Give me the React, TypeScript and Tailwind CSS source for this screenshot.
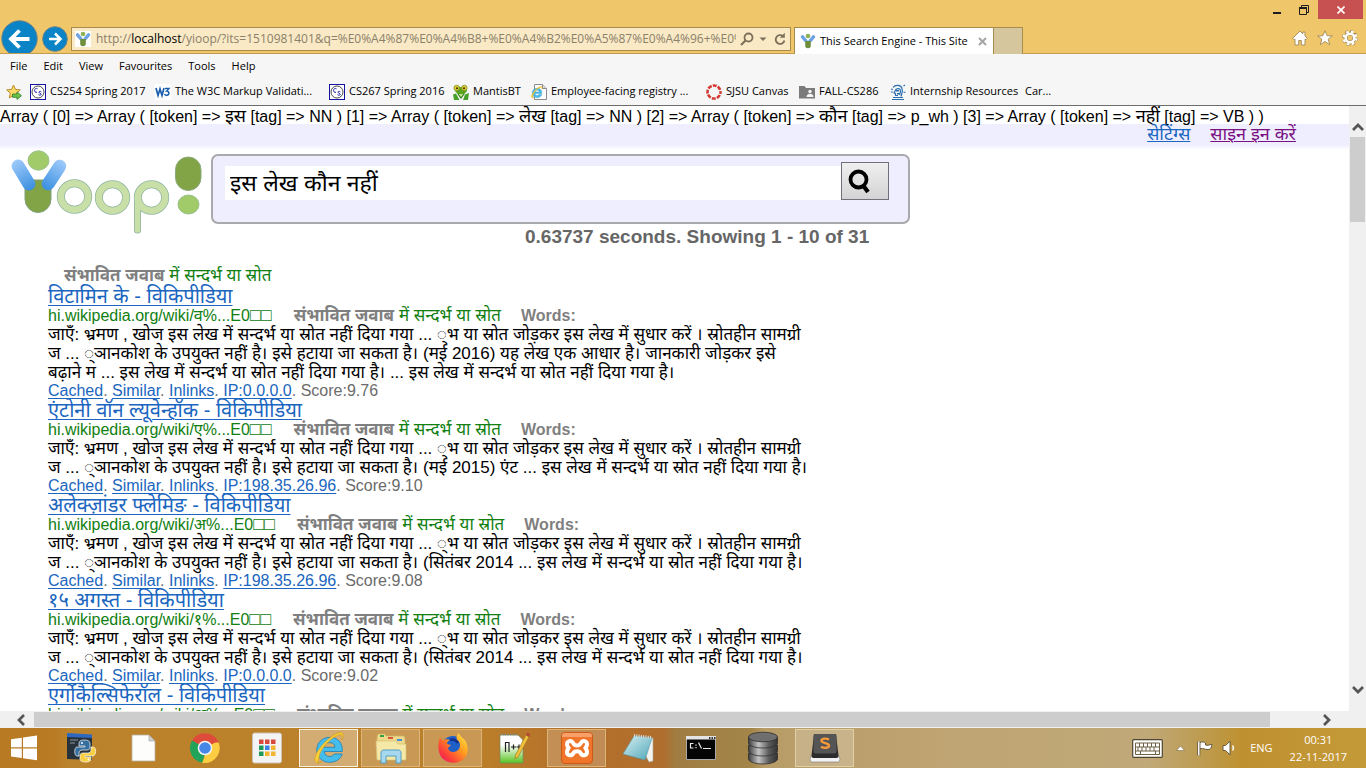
import React from "react";

const UI = "font-['Open_Sans','Noto_Sans',sans-serif]";
const ARIAL = "font-['Liberation_Sans','Noto_Sans',sans-serif]";

/* ---------- small drawings ---------- */

function YioopMark({ className }: { className: string }) {
  return (
    <svg viewBox="0 0 16 16" className={className} aria-hidden="true">
      <rect width="16" height="16" fill="#fff" />
      <path d="M2.500 3.800 L6 8 M13.500 3.800 L10 8" stroke="#6ea3e4" strokeWidth="3.400" strokeLinecap="round" />
      <circle cx="8" cy="3" r="2.300" fill="#8db255" />
      <path d="M5.200 8h5.600v4.500a2.800 2.800 0 0 1-5.600 0z" fill="#6f8f3c" />
    </svg>
  );
}

function YioopLogo() {
  return (
    <svg viewBox="0 0 194 88" className="h-[88px] w-[194px]" role="img" aria-label="Yioop!">
      <defs>
        <linearGradient id="arm" x1="0" y1="0" x2="0" y2="1">
          <stop offset="0" stopColor="#9fcbfb" />
          <stop offset="1" stopColor="#3b8fe0" />
        </linearGradient>
      </defs>
      <path d="M15 30h26v19a13 13.500 0 0 1-26 0z" fill="#82a446" stroke="#7d9f7c" />
      <rect x="-6.500" y="-17" width="13" height="34" rx="6.500" transform="translate(13.500 25) rotate(-31)" fill="url(#arm)" />
      <rect x="-6.500" y="-17" width="13" height="34" rx="6.500" transform="translate(44 25) rotate(33)" fill="url(#arm)" />
      <ellipse cx="28.500" cy="10.500" rx="10.500" ry="9.700" fill="#a1cb69" stroke="#9abf8c" />
      <g fill="none" stroke="#8fb3a0" strokeWidth="8">
        <ellipse cx="64.500" cy="46.500" rx="13.700" ry="13.200" />
        <ellipse cx="102.500" cy="47.500" rx="13.700" ry="13.200" />
        <path d="M127.500 48v32" strokeWidth="7" strokeLinecap="round" />
        <ellipse cx="141.500" cy="47.500" rx="13.700" ry="13.200" />
      </g>
      <g fill="none" stroke="#c8e0a8" strokeWidth="6.500">
        <ellipse cx="64.500" cy="46.500" rx="13.700" ry="13.200" />
        <ellipse cx="102.500" cy="47.500" rx="13.700" ry="13.200" />
        <path d="M127.500 48v32" strokeWidth="5.500" strokeLinecap="round" />
        <ellipse cx="141.500" cy="47.500" rx="13.700" ry="13.200" />
      </g>
      <rect x="165.500" y="7" width="25.500" height="33.500" rx="12.700" fill="#82a446" stroke="#8bab7c" />
      <ellipse cx="178.500" cy="54.500" rx="10.500" ry="9.500" fill="#a1cb69" stroke="#9abf8c" />
    </svg>
  );
}

function CsIcon() {
  return (
    <svg viewBox="0 0 16 16" className="size-4 shrink-0" aria-hidden="true">
      <rect x=".5" y=".5" width="15" height="15" fill="#fff" stroke="#1414a0" />
      <circle cx="8" cy="8" r="6" fill="none" stroke="#222" strokeWidth=".8" />
      <path d="M7.500 4.800C5.500 3.500 3.700 6 5 7.800c.6.600 1.400.700 2 .400M11.300 7.800c-1-.8-2.500-.4-2.300.6s2.400.8 2.300 2c-.3 1-2 1-2.800.2" fill="none" stroke="#1a1aa8" />
    </svg>
  );
}

function StarAddIcon() {
  return (
    <svg viewBox="0 0 16 16" className="size-4 shrink-0" aria-hidden="true">
      <path d="M7.500 1l2 4.400 4.800.500-3.600 3.200 1 4.800-4.200-2.500-4.200 2.500 1-4.800L.7 5.900l4.800-.500z" fill="#fbd968" stroke="#b98c28" />
      <path d="M6.500 10h4.500V7.800l4.500 3.900-4.500 3.800v-2.200H6.500z" fill="#6cc04a" stroke="#2f7d28" strokeWidth=".8" />
    </svg>
  );
}

function W3Icon() {
  return (
    <svg viewBox="0 0 16 16" className="size-4 shrink-0" aria-hidden="true">
      <rect width="16" height="16" fill="#fff" />
      <path d="M1 4l2 7.500L5 5l2 6.500L9 4" fill="none" stroke="#1a5fae" strokeWidth="1.700" />
      <path d="M10 4.500h4l-2.300 2.600c2.600-.2 3.200 4-.2 4.300-1 0-1.700-.5-2-1.300" fill="none" stroke="#1a5fae" strokeWidth="1.500" />
    </svg>
  );
}

function MantisIcon() {
  return (
    <svg viewBox="0 0 16 16" className="size-4 shrink-0" aria-hidden="true">
      <path d="M3 3l10 0 1 4-3 3.500h-6L2 7z" fill="#58a521" />
      <path d="M0 10.500l3-1 3.500 6.500H1zM16 9l-4 1.500-2 5.500h5z" fill="#47a02a" />
      <path d="M5 10l3 4 3-4" stroke="#2d7b1b" strokeWidth="1.200" fill="#c4e58c" />
      <circle cx="3.700" cy="4" r="2.800" fill="#e6c72d" stroke="#66901f" strokeWidth=".7" />
      <circle cx="11.300" cy="4" r="2.800" fill="#e6c72d" stroke="#66901f" strokeWidth=".7" />
      <circle cx="4" cy="4.200" r="1" fill="#332c10" />
      <circle cx="11" cy="4.200" r="1" fill="#332c10" />
    </svg>
  );
}

function IeLetter() {
  return (
    <>
      <path
        d="M25.800 20.500H11.200c.3 3.400 2.500 5 5.400 5 2.200 0 3.700-.9 4.600-2.500h8c-1.800 5.500-6.700 8.300-12.500 8.300C9.300 31.300 3.800 26.300 3.800 19S9.300 6.300 16.800 6.300c8 0 13 5.400 12.500 14.200zM22 16.300c-.3-3-2.200-4.700-5.300-4.700s-5 1.700-5.500 4.700z"
        fill="#45bdec"
        stroke="#1a7fb8"
        strokeWidth=".8"
      />
      <path d="M6 27.500C3.500 32 5 33 9 30.500 2 34.500-1 29 5.500 19 12 9.500 24 0 28.500 1.700c2.500 1 1.800 4.300.3 7 .6-2.800.5-4.700-1.300-5C23 3 13 12 9 18.500c-2.500 4-3 6.500-3 9z" fill="#f9cf3a" stroke="#d59e16" strokeWidth=".7" />
    </>
  );
}

function IePageIcon() {
  return (
    <svg viewBox="0 0 16 16" className="size-4 shrink-0" aria-hidden="true">
      <path d="M3.500.5h8l4 4v11h-12z" fill="#fff" stroke="#8b8b8b" />
      <path d="M11.500.5v4h4" fill="#ddd" stroke="#8b8b8b" />
      <g transform="translate(-.2 1.800) scale(.38)">
        <IeLetter />
      </g>
    </svg>
  );
}

function CanvasIcon() {
  return (
    <svg viewBox="0 0 16 16" className="size-4 shrink-0" aria-hidden="true">
      <circle cx="8" cy="8" r="6.500" fill="none" stroke="#d23a33" strokeWidth="2.600" strokeDasharray="3.900 1.205" strokeDashoffset="2" />
    </svg>
  );
}

function SharedFolderIcon() {
  return (
    <svg viewBox="0 0 16 16" className="size-4 shrink-0" aria-hidden="true">
      <path d="M0 2h5.500l1.500 2h9v10.500H0z" fill="#7b7b7b" />
      <circle cx="11" cy="7.500" r="1.700" fill="#f5f5f5" />
      <path d="M7.500 13c0-4.200 7-4.200 7 0z" fill="#f5f5f5" />
    </svg>
  );
}

function StatueIcon() {
  return (
    <svg viewBox="0 0 16 16" className="size-4 shrink-0" aria-hidden="true">
      <g fill="none" stroke="#2c6fb0" strokeWidth="1.200">
        <path d="M3 3.500C5 .5 11 .5 12 4.500c1.300 3-.3 5.500-1 8" />
        <path d="M5 7c1-3 5-3 5.500-.5.300 2-1 2.500-.5 4.500M5 7l-1 2 1.500.5v2H8" />
        <path d="M2 15.500h12M3 13.500h10M1 5l2 .5M.8 8l2 0M13.500 2l1.500-1M13.500 8l2 .500" />
      </g>
      <path d="M6 6h3v1.500H6zM7 9h3v1.500H7z" fill="#2c6fb0" />
    </svg>
  );
}

/* ---------- browser frame ---------- */

function BrowserHeader() {
  return (
    <header className={`${UI} flex h-[54px] items-start border-b border-[#c29d4f] bg-[#efc76a] text-[12px]`}>
      <div className="flex h-[53px] shrink-0 items-start overflow-hidden pt-[20px] pl-[1px]">
        <button aria-label="Back" className="size-[37px] shrink-0">
          <svg viewBox="0 0 37 37" className="size-full">
            <circle cx="18.500" cy="18.500" r="17.700" fill="#0a84c6" stroke="#68808a" />
            <path d="M28.500 19H11M18.500 10.500L10 19l8.500 8.500" fill="none" stroke="#fff" strokeWidth="3.800" />
          </svg>
        </button>
        <button aria-label="Forward" className="mt-[6px] ml-1 size-[26px] shrink-0">
          <svg viewBox="0 0 26 26" className="size-full">
            <circle cx="13" cy="13" r="12.300" fill="#0a84c6" stroke="#68808a" />
            <path d="M7 13h11M13 7.500l5.500 5.500-5.500 5.500" fill="none" stroke="#fff" strokeWidth="2.500" />
          </svg>
        </button>
      </div>
      <div className="mt-[27px] ml-[3px] flex h-6 w-[720px] shrink-0 items-center border border-[#a98c4c] bg-[#f9e9c5] pl-[3px] text-[#8b8069]">
        <YioopMark className="mr-[5px] size-4 shrink-0" />
        <div className="w-[640px] overflow-hidden whitespace-nowrap">
          http://<span className="text-black">localhost</span>
          /yioop/?its=1510981401&amp;q=%E0%A4%87%E0%A4%B8+%E0%A4%B2%E0%A5%87%E0%A4%96+%E0%A4
        </div>
        <button aria-label="Search" className="ml-1 shrink-0">
          <svg viewBox="0 0 14 14" className="size-[14px]">
            <circle cx="8.500" cy="5.500" r="4" fill="none" stroke="#7c705a" strokeWidth="1.800" />
            <path d="M5.500 8.500L1 13" stroke="#7c705a" strokeWidth="2.200" />
          </svg>
        </button>
        <button aria-label="Show address bar list" className="ml-[5px] shrink-0">
          <svg viewBox="0 0 8 8" className="size-2">
            <path d="M.5 2.500h7L4 6z" fill="#7c705a" />
          </svg>
        </button>
        <button aria-label="Refresh" className="ml-[6px] shrink-0">
          <svg viewBox="0 0 14 14" className="size-[14px]">
            <path d="M10 4.200A4.400 4.400 0 1 0 11.400 8.500" fill="none" stroke="#7c705a" strokeWidth="1.800" />
            <path d="M11.800.8v5H6.800z" fill="#7c705a" />
          </svg>
        </button>
      </div>
      <div className="mt-[27px] ml-[3px] flex h-[27px] w-[200px] shrink-0 items-center border border-b-0 border-[#a98c4c] bg-white pl-[5px] text-[11px]">
        <YioopMark className="mr-1 size-4 shrink-0" />
        <span className="whitespace-nowrap">This Search Engine - This Site</span>
        <button aria-label="Close tab" className="mr-[6px] ml-auto shrink-0">
          <svg viewBox="0 0 9 9" className="size-[9px]">
            <path d="M1 1l7 7M8 1L1 8" stroke="#a5a5a5" strokeWidth="2" />
          </svg>
        </button>
      </div>
      <button aria-label="New tab" className="mt-[27px] h-[27px] w-[29px] shrink-0 border border-b-0 border-l-0 border-[#a98c4c] bg-[#d6c69e]" />
      <div className="ml-auto flex flex-col items-end pr-[3px]">
        <div className="flex h-[19px] items-center">
          <button aria-label="Minimise" className="px-[9px]">
            <svg viewBox="0 0 8 10" className="h-[10px] w-2">
              <path d="M0 8h8" stroke="#1d1d1d" strokeWidth="2" />
            </svg>
          </button>
          <button aria-label="Restore" className="px-[9px]">
            <svg viewBox="0 0 10 10" className="size-[10px]">
              <path d="M2.500 2V.500h7v7H8" fill="none" stroke="#1d1d1d" />
              <path d="M.5 3h7v6.500h-7z" fill="none" stroke="#1d1d1d" />
              <path d="M0 3h8" stroke="#1d1d1d" strokeWidth="2" />
            </svg>
          </button>
          <button aria-label="Close" className="flex h-[19px] w-[45px] items-center justify-center bg-[#c75050]">
            <svg viewBox="0 0 8 8" className="size-2">
              <path d="M.5.5l7 7M7.500.5l-7 7" stroke="#fff" strokeWidth="1.700" />
            </svg>
          </button>
        </div>
        <div className="mt-[11px] flex gap-[9px] pr-[5px]">
          <button aria-label="Home">
            <svg viewBox="0 0 16 16" className="size-4">
              <path d="M8 1L.7 8.300l1.500 1.500.8-.8v6h3.700v-4.500h2.600V15H13V9l.8.8 1.500-1.500L13 6V2h-2.200v1.800z" fill="#fff" stroke="#a18955" strokeWidth=".9" />
            </svg>
          </button>
          <button aria-label="Favourites">
            <svg viewBox="0 0 16 16" className="size-4">
              <path d="M8 .8l2.200 5h5.100l-4.100 3.400 1.500 5.500L8 11.500l-4.700 3.200 1.500-5.500L.7 5.800h5.100z" fill="#fff" stroke="#a18955" strokeWidth=".9" />
            </svg>
          </button>
          <button aria-label="Settings">
            <svg viewBox="0 0 16 16" className="size-4">
              <circle cx="8" cy="8" r="6.600" fill="none" stroke="#a18955" strokeWidth="2.800" strokeDasharray="3 2.184" />
              <circle cx="8" cy="8" r="4.400" fill="none" stroke="#a18955" strokeWidth="4" />
              <circle cx="8" cy="8" r="6.300" fill="none" stroke="#fff" strokeWidth="2.400" strokeDasharray="2.400 2.548" strokeDashoffset="-.3" />
              <circle cx="8" cy="8" r="4.300" fill="none" stroke="#fff" strokeWidth="2.600" />
            </svg>
          </button>
        </div>
      </div>
    </header>
  );
}

const menuItems = ["File", "Edit", "View", "Favourites", "Tools", "Help"];

const bookmarks = [
  { label: "CS254 Spring 2017", icon: <CsIcon />, width: "w-[125px]" },
  { label: "The W3C Markup Validati...", icon: <W3Icon />, width: "w-[174px]" },
  { label: "CS267 Spring 2016", icon: <CsIcon />, width: "w-[124px]" },
  { label: "MantisBT", icon: <MantisIcon />, width: "w-[78px]" },
  { label: "Employee-facing registry ...", icon: <IePageIcon />, width: "w-[175px]" },
  { label: "SJSU Canvas", icon: <CanvasIcon />, width: "w-[93px]" },
  { label: "FALL-CS286", icon: <SharedFolderIcon />, width: "w-[91px]" },
  { label: "Internship Resources", icon: <StatueIcon />, width: "w-[135px]" },
  { label: "Car...", icon: null, width: "w-[40px]" },
];

function Toolbars() {
  return (
    <div className={`${UI} border-b border-[#6d6d6d] bg-[#f6f6f6] text-[11px] whitespace-nowrap text-black`}>
      <nav aria-label="Menu" className="flex h-6 items-center gap-4 pl-[10px]">
        {menuItems.map((item) => (
          <button key={item}>{item}</button>
        ))}
      </nav>
      <nav aria-label="Favourites" className="flex h-[27px] items-center pl-[6px]">
        <button aria-label="Add to favourites" className="w-6">
          <StarAddIcon />
        </button>
        {bookmarks.map((b) => (
          <a key={b.label} href="#" className={`${b.width} flex shrink-0 items-center gap-1`}>
            {b.icon}
            <span>{b.label}</span>
          </a>
        ))}
      </nav>
    </div>
  );
}

/* ---------- page ---------- */

interface Result {
  title: string;
  letter: string;
  lines: string[];
  ip: string;
  score: string;
}

const FIRST_LINE = "जाएँ: भ्रमण , खोज इस लेख में सन्दर्भ या स्रोत नहीं दिया गया ... ्भ या स्रोत जोड़कर इस लेख में सुधार करें । स्रोतहीन सामग्री";

const results: Result[] = [
  {
    title: "विटामिन के - विकिपीडिया",
    letter: "व",
    lines: [
      FIRST_LINE,
      "ज ... ्ञानकोश के उपयुक्त नहीं है। इसे हटाया जा सकता है। (मई 2016) यह लेख एक आधार है। जानकारी जोड़कर इसे",
      "बढ़ाने म ... इस लेख में सन्दर्भ या स्रोत नहीं दिया गया है। ... इस लेख में सन्दर्भ या स्रोत नहीं दिया गया है।",
    ],
    ip: "IP:0.0.0.0",
    score: "9.76",
  },
  {
    title: "एंटोनी वॉन ल्यूवेन्हॉक - विकिपीडिया",
    letter: "ए",
    lines: [
      FIRST_LINE,
      "ज ... ्ञानकोश के उपयुक्त नहीं है। इसे हटाया जा सकता है। (मई 2015) एंट ... इस लेख में सन्दर्भ या स्रोत नहीं दिया गया है।",
    ],
    ip: "IP:198.35.26.96",
    score: "9.10",
  },
  {
    title: "अलेक्ज़ांडर फ्लेमिङ - विकिपीडिया",
    letter: "अ",
    lines: [
      FIRST_LINE,
      "ज ... ्ञानकोश के उपयुक्त नहीं है। इसे हटाया जा सकता है। (सितंबर 2014 ... इस लेख में सन्दर्भ या स्रोत नहीं दिया गया है।",
    ],
    ip: "IP:198.35.26.96",
    score: "9.08",
  },
  {
    title: "१५ अगस्त - विकिपीडिया",
    letter: "१",
    lines: [
      FIRST_LINE,
      "ज ... ्ञानकोश के उपयुक्त नहीं है। इसे हटाया जा सकता है। (सितंबर 2014 ... इस लेख में सन्दर्भ या स्रोत नहीं दिया गया है।",
    ],
    ip: "IP:0.0.0.0",
    score: "9.02",
  },
  {
    title: "एर्गोकैल्सिफेरॉल - विकिपीडिया",
    letter: "अ",
    lines: [],
    ip: "",
    score: "",
  },
];

function PossibleAnswer() {
  return (
    <span className="text-[17px]">
      <b className="text-[#7f7f7f]">संभावित जवाब</b> <span className="text-[#118011]">में सन्दर्भ या स्रोत</span>
    </span>
  );
}

function MetaLink({ children }: { children: React.ReactNode }) {
  return (
    <>
      <a href="#" className="text-[#1a66c0] underline underline-offset-2">
        {children}
      </a>
      .{" "}
    </>
  );
}

function ResultItem({ r }: { r: Result }) {
  return (
    <article className="whitespace-nowrap">
      <h2 className="h-5 text-[20px] leading-5">
        <a href="#" className="text-[#1a66c0] underline decoration-1 underline-offset-2">
          {r.title}
        </a>
      </h2>
      <div className="flex h-[19px] items-baseline leading-[19px] text-[#118011]">
        <span>
          hi.wikipedia.org/wiki/{r.letter}%...E0<span className="text-[18px]">□□</span>
        </span>
        <span className="ml-[22px]">
          <PossibleAnswer />
        </span>
        <b className="ml-5 text-[#7f7f7f]">Words:</b>
      </div>
      {r.lines.length > 0 && (
        <>
          <p className="text-[17px] leading-[19px]">
            {r.lines.map((line) => (
              <span key={line} className="block h-[19px]">
                {line}
              </span>
            ))}
          </p>
          <div className="h-[18px] leading-[17px] text-[#6b6b6b]">
            <MetaLink>Cached</MetaLink>
            <MetaLink>Similar</MetaLink>
            <MetaLink>Inlinks</MetaLink>
            <MetaLink>{r.ip}</MetaLink>
            Score:{r.score}
          </div>
        </>
      )}
    </article>
  );
}

function Token({ children }: { children: string }) {
  return <span className="text-[18px]">{children}</span>;
}

function Page() {
  return (
    <main className={`${ARIAL} min-h-0 min-w-0 flex-1 overflow-hidden bg-white text-[16px] text-black`}>
      <div className="h-[18px] leading-5 whitespace-nowrap">
        Array ( [0] =&gt; Array ( [token] =&gt; <Token>इस</Token> [tag] =&gt; NN ) [1] =&gt; Array ( [token] =&gt; <Token>लेख</Token> [tag] =&gt; NN ) [2] =&gt; Array ( [token]
        =&gt; <Token>कौन</Token> [tag] =&gt; p_wh ) [3] =&gt; Array ( [token] =&gt; <Token>नहीं</Token> [tag] =&gt; VB ) )
      </div>
      <div className="flex h-[26px] justify-end gap-5 bg-linear-to-b from-[#eeeeff] from-80% to-white pr-[53px] text-[18px] leading-5">
        <a href="#" className="text-[#1a66c0] underline decoration-1">
          सेटिंग्स
        </a>
        <a href="#" className="text-[#7a1182] underline decoration-1">
          साइन इन करें
        </a>
      </div>
      <div className="flex pl-[10px]">
        <YioopLogo />
        <form className="mt-[4px] ml-[7px] flex h-[70px] w-[699px] items-start rounded-[7px] border-2 border-[#a9a9ae] bg-[#eeeeff] pt-[6px] pl-3" onSubmit={(e) => e.preventDefault()}>
          <input
            aria-label="Search"
            defaultValue="इस लेख कौन नहीं"
            className="mt-[4px] h-[34px] w-[616px] bg-white px-[5px] text-[23px] outline-none"
          />
          <button aria-label="Search" className="h-[38px] w-12 border border-[#707078] bg-linear-to-b from-[#efefef] to-[#d4d4d4] pl-[6px]">
            <svg viewBox="0 0 24 26" className="h-[26px] w-6">
              <circle cx="10.500" cy="11.500" r="8" fill="none" stroke="#000" strokeWidth="3.800" />
              <path d="M15.500 18l4.500 6" stroke="#000" strokeWidth="4.200" />
            </svg>
          </button>
        </form>
      </div>
      <div className="-mt-[12px] pl-[525px] text-[19px] leading-[22px] font-bold text-[#666]">0.63737 seconds. Showing 1 - 10 of 31</div>
      <section aria-label="Results" className="mt-[17px] pl-12">
        <div className="h-[21px] pl-4 leading-[21px]">
          <PossibleAnswer />
        </div>
        {results.map((r) => (
          <ResultItem key={r.title} r={r} />
        ))}
      </section>
    </main>
  );
}

/* ---------- scroll bars ---------- */

function Chevron({ turn }: { turn: string }) {
  return (
    <svg viewBox="0 0 12 12" className={`${turn} size-3`} aria-hidden="true">
      <path d="M1 9l5-5 5 5" fill="none" stroke="#555" strokeWidth="2.700" />
    </svg>
  );
}

function VerticalScroll() {
  return (
    <div className="flex w-[17px] shrink-0 flex-col items-center bg-[#f0f0f0] pt-[15px] pb-[15px]">
      <button aria-label="Scroll up">
        <Chevron turn="rotate-0" />
      </button>
      <div className="mt-1 h-[85px] w-[15px] bg-[#cdcdcd]" />
      <button aria-label="Scroll down" className="mt-auto">
        <Chevron turn="rotate-180" />
      </button>
    </div>
  );
}

function HorizontalScroll() {
  return (
    <div className="flex h-[17px] shrink-0 items-center bg-[#f0f0f0] pr-[33px] pl-[15px]">
      <button aria-label="Scroll left">
        <Chevron turn="-rotate-90" />
      </button>
      <div className="mr-[51px] ml-[7px] h-[15px] flex-1 bg-[#cdcdcd]" />
      <button aria-label="Scroll right">
        <Chevron turn="rotate-90" />
      </button>
    </div>
  );
}

/* ---------- task bar ---------- */

const PythonIcon = () => (
  <svg viewBox="0 0 32 32" className="size-8">
    <path d="M2 2l25 2v24L2 27z" fill="#28323c" />
    <path d="M2 1l25 1.500V6L2 5z" fill="#2e68c0" />
    <path d="M5 8h8M5 11h5" stroke="#8d9499" />
    <path d="M19 8c-4 0-5 1.500-5 4v2h6v1h-8c-3 0-3 9 0 9h2v-3c0-2 1.500-3 3-3h5c2 0 3-1 3-3v-3c0-3-2-4-6-4z" fill="#356f9f" stroke="#fff" strokeWidth=".7" />
    <path d="M21 30c4 0 5-1.500 5-4v-1h-6v-1h8c3 0 4-9 0-9h-2v3c0 2-1.500 3-3 3h-5c-2 0-3 1-3 3v3c0 2 2 3 6 3z" fill="#f8cf43" stroke="#fff" strokeWidth=".7" />
    <circle cx="17" cy="11" r="1" fill="#fff" />
    <circle cx="23.500" cy="27.500" r="1" fill="#fff" />
  </svg>
);

const FileIcon = () => (
  <svg viewBox="0 0 32 32" className="size-8">
    <path d="M5 3h17l6 6v20H5z" fill="#fdfdfb" stroke="#b7b0a0" strokeWidth=".8" />
    <path d="M22 3v6h6z" fill="#cfcfcf" stroke="#a9a9a9" strokeWidth=".7" />
  </svg>
);

const ChromeIcon = () => (
  <svg viewBox="0 0 32 32" className="size-8">
    <path d="M16 16L3 8.500A15 15 0 0 1 29.200 9.300z" fill="#df4b3b" />
    <path d="M16 16L29 9a15 15 0 0 1-13.500 22z" fill="#fdce42" />
    <path d="M16 16l1 1-3.500 13.800A15 15 0 0 1 3 8.500z" fill="#22a35a" />
    <path d="M16 9h13.200a15 15 0 0 1 1 1.500H16z" fill="#df4b3b" />
    <path d="M22 19.500L15.500 31h-2.400L18 19z" fill="#fdce42" />
    <circle cx="16" cy="16" r="7.300" fill="#f5f5f2" />
    <circle cx="16" cy="16" r="5.800" fill="#4787e8" />
  </svg>
);

const AppsIcon = () => (
  <svg viewBox="0 0 32 32" className="size-8">
    <rect x="1.500" y="1" width="29" height="30" rx="2" fill="#f4f4f4" stroke="#cbc2b4" />
    <g>
      <path d="M8 7.500h4.500V12H8zM14 7.500h4.500V12H14zM20 7.500h4.500V12H20z" fill="#d8483c" />
      <path d="M8 13.500h4.500V18H8zM8 19.500h4.500V24H8z" fill="#1e9957" />
      <path d="M14 13.500h4.500V18H14z" fill="#3c82e6" />
      <path d="M20 13.500h4.500V18H20zM14 19.500h4.500V24H14zM20 19.500h4.500V24H20z" fill="#f2b632" />
    </g>
  </svg>
);

const IeIcon = () => (
  <svg viewBox="0 0 32 34" className="h-[34px] w-8">
    <IeLetter />
  </svg>
);

const ExplorerIcon = () => (
  <svg viewBox="0 0 32 32" className="size-8">
    <path d="M2 5l1-3h7l1 2h18l1 3v20H2z" fill="#eed98a" stroke="#cdb35f" strokeWidth=".7" />
    <path d="M5 3h4v2H5z" fill="#35a24a" />
    <path d="M13 5h5v2h-5z" fill="#d9543b" />
    <path d="M22 7h5v2h-5z" fill="#3c8fd6" />
    <path d="M1 9h20l2 3h8v16H2z" fill="#f6e8a6" stroke="#d6c073" strokeWidth=".7" />
    <path d="M6 31V21c0-2 1-3 3-3h14c2 0 3 1 3 3v10h-5v-7H11v7z" fill="#a8d8ef" stroke="#4f9fc4" />
  </svg>
);

const FirefoxIcon = () => (
  <svg viewBox="0 0 32 32" className="size-8">
    <defs>
      <linearGradient id="fox" x1="1" y1="0" x2="0" y2="1">
        <stop offset="0" stopColor="#fff04a" />
        <stop offset=".4" stopColor="#ff9a1f" />
        <stop offset=".75" stopColor="#fb3a3c" />
        <stop offset="1" stopColor="#e3167c" />
      </linearGradient>
    </defs>
    <circle cx="16" cy="16" r="12" fill="#1f5fc8" />
    <path d="M3 5c1 2 2 3 3 3.500C8 7 11 7 13 8c-2 1-3 2-3 4l4 1-3 3c1 5 8 5 11 1 2-4 1-7-2-9-1-3 0-5 2-7 0 3 5 5 7 9 3 7 2 13-3 17.500-6 5-15 4-20-.5C.5 22 .5 12 3 5z" fill="url(#fox)" />
    <path d="M13 8c3-1 6 0 8 3" stroke="#12308c" strokeWidth="2.500" fill="none" />
  </svg>
);

const NotepadPlusIcon = () => (
  <svg viewBox="0 0 32 32" className="size-8">
    <defs>
      <linearGradient id="npp" x1="0" y1="0" x2="0" y2="1">
        <stop offset=".35" stopColor="#fff" />
        <stop offset="1" stopColor="#58c322" />
      </linearGradient>
    </defs>
    <path d="M1 3h18l5 5v23H1z" fill="url(#npp)" stroke="#6c8a5a" strokeWidth=".7" />
    <path d="M1 2.500h18" stroke="#888" strokeWidth="2" strokeDasharray="1 1.500" />
    <path d="M6.500 20v-9.500h3.500V20M12 15h5M14.500 12.500v5M17.500 15h5M20 12.500v5" fill="none" stroke="#222" strokeWidth="1.200" />
    <path d="M27 3l3 2-11 20-3 2 .5-4z" fill="#efc13c" stroke="#9a6f1a" strokeWidth=".6" />
    <path d="M27 3l1.500-2.500L31 2l-1 3z" fill="#b4443c" />
  </svg>
);

const XamppIcon = () => (
  <svg viewBox="0 0 32 32" className="size-8">
    <rect x=".5" y=".5" width="31" height="31" rx="3.500" fill="#f0742a" stroke="#cc5a17" />
    <path d="M4 1h24q3 0 3 3v1H1V4q0-3 3-3z" fill="#f7a06a" />
    <path d="M12.500 11.500C10 7.500 6 9 6 12.300c0 2 1 3 1.700 3.700C7 16.700 6 18 6 20c0 3.500 4.500 4.700 6.500 1C13.500 18.500 18.500 18.500 19.500 21c2 3.700 6.500 2.500 6.500-1 0-2-1-3.300-1.700-4 .7-.7 1.700-1.700 1.700-3.700 0-3.300-4-4.800-6.500-.8-1 2.500-6 2.500-7 0z" fill="none" stroke="#fff" strokeWidth="4" strokeLinejoin="round" />
  </svg>
);

const NotepadIcon = () => (
  <svg viewBox="0 0 32 32" className="size-8">
    <defs>
      <linearGradient id="pad" x1="0" y1="0" x2="1" y2="1">
        <stop offset="0" stopColor="#d8f0f3" />
        <stop offset="1" stopColor="#4fa6b8" />
      </linearGradient>
    </defs>
    <path d="M12 4l18 2v23l-4 1z" fill="#f3f3f0" stroke="#a9a9a0" strokeWidth=".6" />
    <path d="M11 4l18 2-7 22-22-6z" fill="url(#pad)" stroke="#5b95a2" strokeWidth=".6" />
    <path d="M11 3.500l18 2" stroke="#ddd" strokeWidth="3" strokeDasharray="1 1.300" />
  </svg>
);

const CmdIcon = () => (
  <svg viewBox="0 0 32 32" className="size-8">
    <path d="M1.500 4.500h29v23h-29z" fill="#050505" stroke="#a9a9a9" />
    <path d="M1 4h30v3.500H1z" fill="#e4e4e4" />
    <path d="M24 6h1.500M26.500 6H28M29 6h1.500" stroke="#333" strokeWidth="2" />
    <path d="M8.500 11.500h-3v4.500h3M11 12.500v1.200M11 15v1.200M13.500 10.500l3 6M18 16.500h8" fill="none" stroke="#e8e8e8" strokeWidth="1.200" />
  </svg>
);

const DatabaseIcon = () => (
  <svg viewBox="0 0 32 34" className="h-[34px] w-8">
    <defs>
      <linearGradient id="disk" x1="0" y1="0" x2="1" y2="0">
        <stop offset="0" stopColor="#3c3c3c" />
        <stop offset=".35" stopColor="#c4c4c4" />
        <stop offset=".7" stopColor="#5b5b5b" />
        <stop offset="1" stopColor="#333" />
      </linearGradient>
    </defs>
    <g fill="url(#disk)" stroke="#303030" strokeWidth=".8">
      <path d="M1.500 22v6c0 2.500 6 5 14.500 5s14.500-2.500 14.500-5v-6z" />
      <path d="M1.500 14v6c0 2.500 6 5 14.500 5s14.500-2.500 14.500-5v-6z" />
      <path d="M1.500 6v6c0 2.500 6 5 14.500 5s14.500-2.500 14.500-5V6z" />
      <ellipse cx="16" cy="6" rx="14.500" ry="4.800" fill="#6f6f6f" />
    </g>
  </svg>
);

const SublimeIcon = () => (
  <svg viewBox="0 0 32 32" className="size-8">
    <path d="M4 20L1 27q0 3 2 3h26q2 0 2-3l-3-7z" fill="#f2f2f2" stroke="#777" strokeWidth=".6" />
    <path d="M5 2h22l2.500 22q0 2-2 2h-23q-2 0-2-2z" fill="#2c2c2c" />
    <rect x="4.500" y="2" width="23" height="19.500" rx="2" fill="#555" />
    <path d="M20 7.500c-3-1.500-7.500-1.200-7.500 1.300 0 3 7.500 1.500 7.500 4.700 0 2.700-5 3-8 1.200" fill="none" stroke="#f69a3c" strokeWidth="2.400" />
  </svg>
);

const apps = [
  { name: "Python IDLE", icon: <PythonIcon />, frame: "border-transparent" },
  { name: "Documents", icon: <FileIcon />, frame: "border-transparent" },
  { name: "Google Chrome", icon: <ChromeIcon />, frame: "border-transparent" },
  { name: "App Launcher", icon: <AppsIcon />, frame: "border-transparent" },
  { name: "Internet Explorer", icon: <IeIcon />, frame: "border-[#fbf3e2] bg-[#ead8bc]/50" },
  { name: "File Explorer", icon: <ExplorerIcon />, frame: "border-[#dcb57a] bg-white/20" },
  { name: "Firefox", icon: <FirefoxIcon />, frame: "border-[#dcb57a] bg-white/20" },
  { name: "Notepad++", icon: <NotepadPlusIcon />, frame: "border-transparent" },
  { name: "XAMPP", icon: <XamppIcon />, frame: "border-[#dcb57a] bg-white/20" },
  { name: "Notepad", icon: <NotepadIcon />, frame: "border-transparent" },
  { name: "Command Prompt", icon: <CmdIcon />, frame: "border-transparent" },
  { name: "Database", icon: <DatabaseIcon />, frame: "border-transparent" },
  { name: "Sublime Text", icon: <SublimeIcon />, frame: "border-[#e0cfa6] bg-white/20" },
];

function Taskbar() {
  return (
    <footer
      className={`${UI} flex h-10 shrink-0 items-center gap-[3px] bg-[linear-gradient(90deg,#b87b24_0%,#b87b24_4%,#bb832b_5%,#bb7f2a_35%,#b4702a_42%,#b06e2e_48.500%,#a07d42_49.500%,#a38549_55%,#b89c68_56%,#bfa573_70%,#c0a878_84%,#bd9c50_88%,#bf9030_91%,#c49a38_100%)] text-[11px] text-white`}
    >
      <button aria-label="Start" className="flex h-10 w-12 items-center justify-center">
        <svg viewBox="0 0 28 26" className="h-[26px] w-7">
          <path d="M1 4.200l10.800-1.500v9.600H1zM13 2.500L27 .5v11.800H13zM1 13.500h10.800v9.600L1 21.600zM13 13.500h14v11.800l-14-2z" fill="#fff" />
        </svg>
      </button>
      {apps.map((a) => (
        <button key={a.name} aria-label={a.name} className={`${a.frame} flex h-[38px] w-[59px] shrink-0 items-center justify-center border`}>
          {a.icon}
        </button>
      ))}
      <div className="ml-auto flex items-center pr-[19px]">
        <button aria-label="Touch keyboard">
          <svg viewBox="0 0 31 19" className="h-[19px] w-[31px]">
            <rect x=".7" y=".7" width="29.600" height="17.600" rx="1" fill="#fff" stroke="#4e4533" strokeWidth="1.200" />
            <path d="M3.500 4h24v11.500h-24zM3.500 8h24M3.500 12h24M7.500 4v4M11.500 4v4M15.500 4v4M19.500 4v4M23.500 4v4M6 8v4M10 8v4M14 8v4M18 8v4M22 8v4M8.500 12v3.500M23.500 12v3.500" fill="none" stroke="#6c6045" />
          </svg>
        </button>
        <button aria-label="Show hidden icons" className="ml-[13px]">
          <svg viewBox="0 0 9 6" className="h-[6px] w-[9px]">
            <path d="M.5 5.500h8L4.500 1z" fill="#fff" stroke="#6e6144" strokeWidth=".5" />
          </svg>
        </button>
        <button aria-label="Action Center" className="ml-3">
          <svg viewBox="0 0 16 17" className="h-[17px] w-4">
            <path d="M1.800 1.500v14" stroke="#5a5038" strokeWidth="3" />
            <path d="M3 2.500c3-1.500 4 0 5.500.5v2c2 1 4-.5 6.500-.5-.5 3.500-2 5.500-5 5-2 0-3-1.500-7-.8z" fill="#fff" stroke="#5a5038" strokeWidth=".9" />
            <path d="M1.800 1.500v14" stroke="#fff" strokeWidth="1.500" />
          </svg>
        </button>
        <button aria-label="Volume" className="ml-[9px]">
          <svg viewBox="0 0 14 16" className="h-4 w-[14px]">
            <path d="M1 5.500h2.500L8 1.200v13.600l-4.500-4.300H1z" fill="#fff" stroke="#5a5038" strokeWidth=".9" />
            <path d="M10.500 5.500c1.200 1.500 1.200 3.500 0 5" fill="none" stroke="#fff" strokeWidth="1.300" />
          </svg>
        </button>
        <button className="ml-[14px]">ENG</button>
        <div className="ml-[17px] text-center leading-[17px]">
          <div>00:31</div>
          <div>22-11-2017</div>
        </div>
      </div>
    </footer>
  );
}

export default function App() {
  return (
    <div className="flex h-screen flex-col overflow-hidden">
      <BrowserHeader />
      <Toolbars />
      <div className="flex min-h-0 flex-1">
        <Page />
        <VerticalScroll />
      </div>
      <HorizontalScroll />
      <Taskbar />
    </div>
  );
}
